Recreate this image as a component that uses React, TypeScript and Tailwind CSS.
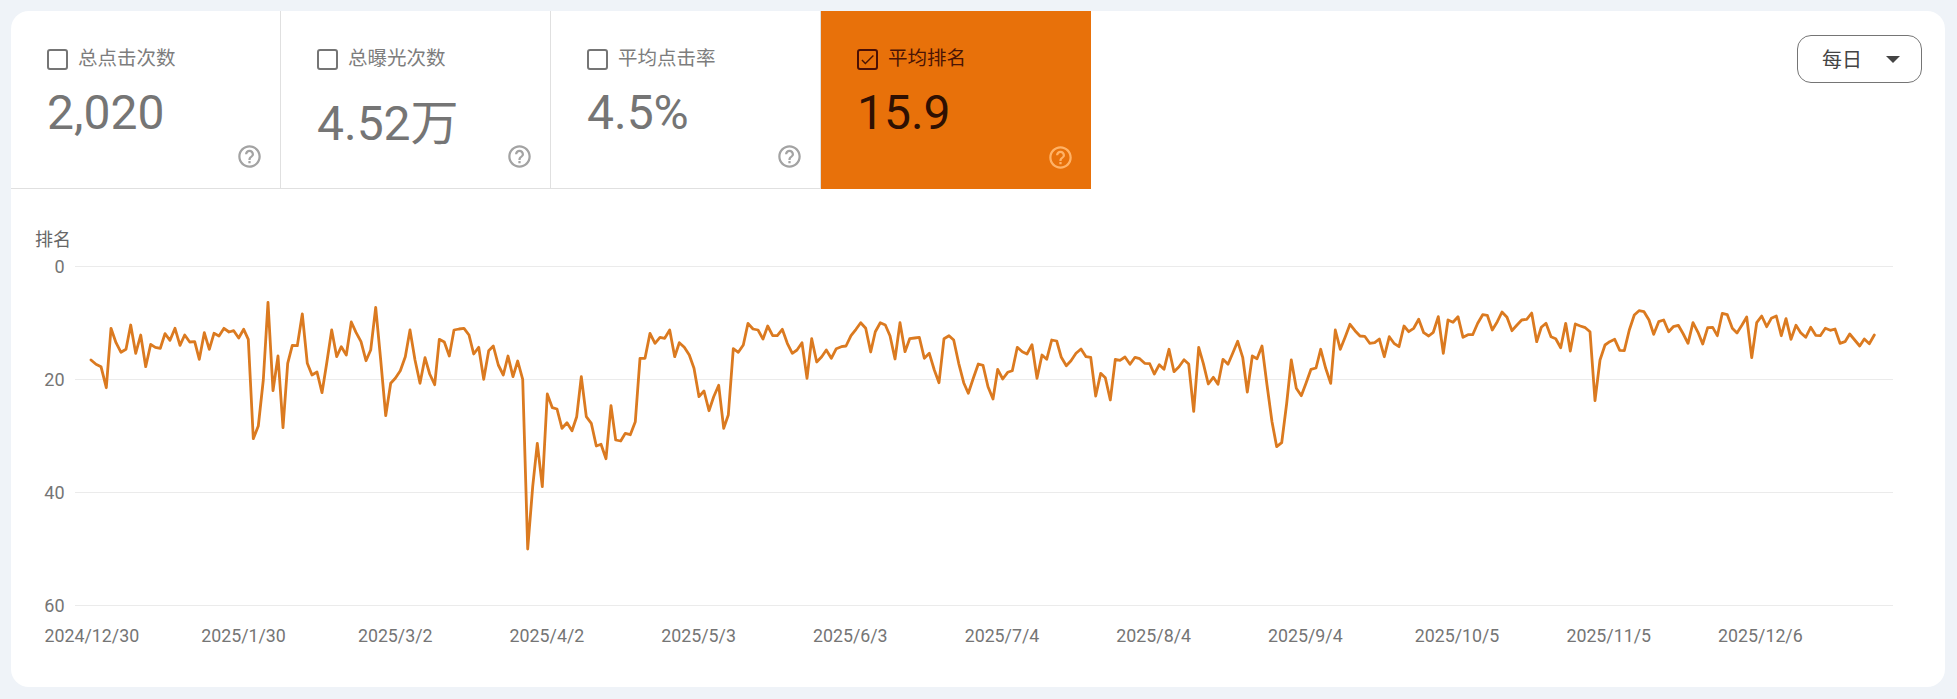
import { MdCheck, MdHelpOutline } from 'react-icons/md'

type Pt = [number, number]

// traced from the reference, in segments: [x, y] at 3x, relative to each segment origin
const SEG_A: Pt[] = [[273,420],[288,433],[303,440],[319,503],[333,325],[348,368],[363,397],[378,388],[392,315],[407,400],[422,345],[437,440],[452,373],[466,382],[481,385],[495,341],[510,361],[525,325],[540,376],[554,345],[569,366],[584,365],[598,418],[613,338],[628,388],[642,340],[657,348],[672,325],[687,336],[701,332],[716,354],[731,328],[745,358],[760,656],[775,618],[790,480],[804,247],[819,512],[834,408],[849,623],[863,430],[877,376],[892,377],[907,282],[922,430],[936,465],[951,456],[966,518],[980,430],[995,330],[1010,410],[1024,380],[1039,405],[1054,306],[1068,337],[1083,365],[1098,422],[1112,390],[1127,262],[1142,420],[1157,587],[1172,490],[1186,475],[1201,452],[1216,410],[1230,330],[1245,420],[1260,490],[1275,413],[1289,462],[1304,494],[1318,358],[1333,366],[1348,408],[1362,330],[1377,327],[1392,325],[1407,345],[1421,402]]
const SEG_B: Pt[] = [[-4,322],[11,418],[26,332],[40,318],[55,375],[70,405],[84,348],[99,410],[113,363],[128,418],[143,927],[158,740],[172,610],[187,740],[202,462],[217,503],[231,507],[246,565],[261,548],[276,572],[290,530],[304,410],[319,530],[334,550],[349,618],[363,613],[378,656],[393,497],[407,600],[422,603],[436,580],[451,584],[466,545],[480,355],[495,355],[510,280],[525,310],[540,292],[554,295],[569,270],[584,350],[598,308],[613,322],[628,345],[642,385],[657,470],[672,453],[687,512],[701,470],[716,436],[731,565],[745,525],[760,326],[775,337],[790,315],[804,250],[819,267],[834,270],[849,297],[863,258],[878,287],[892,287],[907,268],[922,310],[937,340],[951,330],[966,308],[981,415],[995,296],[1010,366],[1025,350],[1039,330],[1054,355],[1069,326],[1084,320],[1098,318],[1113,287],[1128,268],[1142,248],[1157,265],[1172,336],[1186,275],[1201,248],[1216,255],[1230,287],[1245,357],[1260,248],[1275,335],[1289,296],[1304,294],[1318,292],[1333,355],[1348,340],[1363,390],[1377,428],[1392,296],[1407,287],[1421,300]]
const SEG_C: Pt[] = [[-4,370],[11,428],[25,460],[40,415],[55,372],[69,376],[84,440],[99,477],[113,388],[128,417],[143,397],[157,392],[172,322],[187,335],[201,342],[216,314],[231,415],[246,345],[260,358],[275,300],[290,303],[304,352],[319,377],[333,362],[348,340],[363,327],[378,350],[392,352],[407,468],[422,400],[436,413],[451,480],[466,358],[480,361],[495,351],[510,373],[525,352],[539,356],[554,370],[569,371],[583,402],[598,374],[612,388],[627,328],[642,395],[657,380],[672,359],[686,372],[701,514],[716,322],[730,370],[745,432],[760,412],[774,433],[789,358],[804,373],[818,340],[833,304],[848,352],[862,456],[877,348],[891,356],[906,318],[921,435],[936,545],[950,620],[965,608],[980,490],[994,360],[1009,445],[1024,467],[1038,430],[1053,388],[1068,384],[1082,328],[1097,385],[1112,430],[1126,270],[1141,328],[1156,290],[1170,253],[1185,272],[1200,288],[1214,289],[1229,310],[1244,308],[1258,297],[1273,350],[1288,290],[1302,310],[1317,320],[1332,258],[1346,275],[1361,265],[1376,238],[1391,278],[1406,288],[1420,277],[1435,230]]
const SEG_D: Pt[] = [[10,340],[24,240],[39,247],[54,230],[69,292],[84,284],[98,284],[113,250],[128,224],[142,226],[157,270],[172,245],[186,216],[201,232],[216,272],[231,255],[245,240],[260,238],[275,219],[290,305],[304,262],[318,250],[333,290],[347,296],[362,323],[377,250],[391,333],[406,252],[421,258],[436,263],[450,275],[465,482],[480,360],[495,315],[509,305],[524,298],[539,331],[553,332],[568,270],[583,225],[597,212],[612,215],[627,240],[641,283],[656,245],[671,240],[686,275],[700,260],[715,256],[730,282],[744,310],[759,248],[774,277],[788,312],[803,263],[818,262],[832,287],[847,220],[862,224],[877,265],[891,279],[906,255],[920,231],[935,353],[950,248],[965,228],[980,260],[994,235],[1009,228],[1024,287],[1038,236],[1053,298],[1068,256],[1082,278],[1097,292],[1112,262],[1127,286],[1141,287],[1156,265],[1171,271],[1185,267],[1200,310],[1215,305],[1229,282],[1244,300],[1259,318],[1273,297],[1288,311],[1303,285]]

const toPoints = (seg: Pt[], ox: number, oy: number) =>
  seg.map(([x, y]) => `${(ox + x / 3).toFixed(1)},${(oy + y / 3).toFixed(1)}`).join(' ')

const LINE = [
  toPoints(SEG_A, 0, 220),
  toPoints(SEG_B, 480, 240),
  toPoints(SEG_C, 960, 240),
  toPoints(SEG_D, 1440, 240),
].join(' ')

const DATES = ['2024/12/30', '2025/1/30', '2025/3/2', '2025/4/2', '2025/5/3', '2025/6/3', '2025/7/4', '2025/8/4', '2025/9/4', '2025/10/5', '2025/11/5', '2025/12/6']
const TICKS = ['0', '20', '40', '60']

const TILES = [
  { label: '总点击次数', value: '2,020' },
  { label: '总曝光次数', value: '4.52万' },
  { label: '平均点击率', value: '4.5%' },
]

function Tile({ label, value }: { label: string; value: string }) {
  return (
    <div className="flex w-[270px] flex-col border-r border-b border-[#e0e0e0] pt-[38px] pr-[17px] pl-[36px] last:border-r-0">
      <div className="flex h-5 items-center gap-[10px] text-[19.5px] text-[#7d7d7d]">
        <div className="h-[21px] w-[21px] rounded-[3px] border-2 border-[#757575]" />
        <span>{label}</span>
      </div>
      <div className="mt-[15px] h-[54px] text-[48px] leading-[normal] text-[#757575]">{value}</div>
      <MdHelpOutline className="mt-auto mb-[18px] self-end text-[#a3a3a3]" size={27} />
    </div>
  )
}

export default function App() {
  return (
    <div className="h-[699px] w-full bg-[#eff3f8] pt-[11px] pr-3 pb-3 pl-[11px] font-['Roboto','Noto_Sans_CJK_SC',sans-serif]">
      <div className="h-full overflow-hidden rounded-[18px] bg-white">
        <div className="flex h-[178px]">
          {TILES.map(t => (
            <Tile key={t.label} label={t.label} value={t.value} />
          ))}
          <div className="flex w-[270px] flex-col bg-[#e8710a] pt-[38px] pr-[17px] pl-[36px]">
            <div className="flex h-5 items-center gap-[10px] text-[19.5px] text-[#4a1405]">
              <div className="flex h-[21px] w-[21px] shrink-0 items-center justify-center rounded-[3px] border-2 border-[#4a0f05]">
                <MdCheck size={17} />
              </div>
              <span>平均排名</span>
            </div>
            <div className="mt-[15px] h-[54px] text-[48px] leading-[normal] text-[#2e1002]">15.9</div>
            <MdHelpOutline className="mt-auto mb-[18px] self-end text-[#ffb266]" size={27} />
          </div>
          <button className="mt-6 mr-[23px] ml-auto flex h-12 w-[125px] items-center rounded-[14px] border border-[#757575] pl-6 text-xl text-[#444444]">
            <span className="pt-0.5">每日</span>
            <span className="ml-[24px] h-0 w-0 border-x-[7px] border-t-[7px] border-x-transparent border-t-[#444444]" />
          </button>
        </div>

        <div className="relative h-[498px]">
          <div className="pt-[42px] pl-[24px] text-[18px] leading-[18px] text-[#666666]">排名</div>
          <div className="mt-[17px] flex flex-col gap-[112px]">
            {TICKS.map(t => (
              <div key={t} className="flex h-px items-center">
                <span className="w-[53.5px] text-right text-[18px] text-[#757575]">{t}</span>
                <div className="ml-[10px] h-[1.5px] w-[1818px] bg-[#ebebeb]" />
              </div>
            ))}
          </div>
          <div className="mt-[19px] ml-[5px] flex text-[17.8px] leading-[22px] text-[#757575]">
            {DATES.map(d => (
              <div key={d} className="w-[151.7px] text-center">{d}</div>
            ))}
          </div>
          <svg className="pointer-events-none absolute inset-0 h-full w-full" viewBox="11 189 1934 498" fill="none">
            <polyline points={LINE} stroke="#db7a20" strokeWidth="2.8" strokeLinejoin="round" strokeLinecap="round" />
          </svg>
        </div>
      </div>
    </div>
  )
}
